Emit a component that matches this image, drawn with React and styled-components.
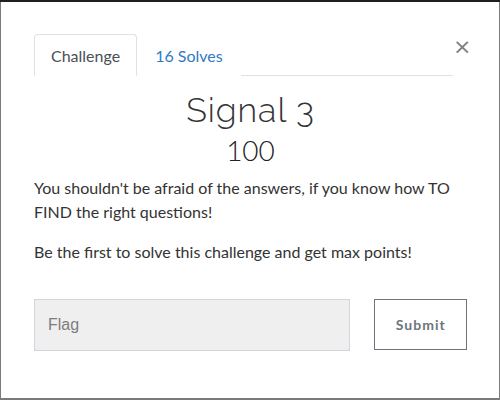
import styled, { createGlobalStyle } from 'styled-components'

const GlobalStyle = createGlobalStyle`
  html, body {
    margin: 0;
    padding: 0;
    background: #1d1f23;
  }
`

const App = () => {
  return <>
    <GlobalStyle />
    <Modal>
      <Header>
        <Tabs>
          <Tab active>Challenge</Tab>
          <Tab>16 Solves</Tab>
        </Tabs>
        <Close aria-label="Close">&times;</Close>
      </Header>
      <Title>Signal 3</Title>
      <Points>100</Points>
      <Description>
        <p>You shouldn't be afraid of the answers, if you know how TO FIND the right questions!</p>
        <p>Be the first to solve this challenge and get max points!</p>
      </Description>
      <SubmitRow>
        <FlagInput placeholder="Flag" />
        <SubmitButton>Submit</SubmitButton>
      </SubmitRow>
    </Modal>
  </>
}

const Modal = styled.div`
  box-sizing: border-box;
  height: 398px;
  margin-top: 2px;
  background: #fff;
  border: 1px solid #7b7b7b;
  border-top: none;
  border-bottom-width: 2px;
  padding: 32px 32px 0 33px;
  font-family: Lato, "Liberation Sans", sans-serif;
  color: #333;
`

const Header = styled.div`
  display: flex;
  align-items: flex-start;
`

const Tabs = styled.div`
  display: flex;
  width: 419px;
  border-bottom: 1px solid #dee2e6;
`

const Tab = styled.div`
  box-sizing: border-box;
  height: 42px;
  padding: 0 ${props => props.active ? '16px' : '17px'};
  margin-bottom: -1px;
  display: flex;
  align-items: center;
  font-size: 16px;
  color: ${props => props.active ? '#495057' : '#2f7bc4'};
  background: #fff;
  border: 1px solid ${props => props.active ? '#dee2e6' : 'transparent'};
  border-bottom-color: ${props => props.active ? '#fff' : 'transparent'};
  border-radius: 4px 4px 0 0;
`

const Close = styled.button`
  margin: 1px 0 0 0;
  padding: 0;
  width: 14px;
  height: 24px;
  border: none;
  background: none;
  font-family: "DejaVu Sans", sans-serif;
  font-size: 22px;
  line-height: 24px;
  font-weight: normal;
  color: #808080;
  cursor: pointer;
`

const Title = styled.h2`
  margin: 12px 0 0;
  text-align: center;
  font-family: Raleway, "Open Sans", sans-serif;
  font-weight: 300;
  font-size: 34px;
  line-height: 44px;
  letter-spacing: 1px;
  color: #333;
`

const Points = styled.h3`
  margin: 0;
  text-align: center;
  font-size: 28px;
  font-weight: 300;
  line-height: 36px;
  color: #222;
`

const Description = styled.div`
  margin-top: 8px;
  font-size: 16px;
  line-height: 24px;
  color: #333;

  p {
    margin: 0 0 16px;
  }
`

const SubmitRow = styled.div`
  display: flex;
  gap: 24px;
  margin-top: 35px;
`

const FlagInput = styled.input`
  box-sizing: border-box;
  width: 318px;
  height: 52px;
  padding: 0 13px;
  background: #efefef;
  border: 1px solid #cfd5db;
  font-family: "Liberation Sans", sans-serif;
  font-size: 16px;
  color: #333;
  outline: none;

  &::placeholder {
    color: #7d7d7d;
  }
`

const SubmitButton = styled.button`
  box-sizing: border-box;
  width: 93px;
  height: 51px;
  background: #fff;
  border: 1px solid #6c757d;
  font-family: Lato, "Liberation Sans", sans-serif;
  font-size: 14px;
  font-weight: bold;
  letter-spacing: 1px;
  color: #6c757d;
  cursor: pointer;
`

export default App
